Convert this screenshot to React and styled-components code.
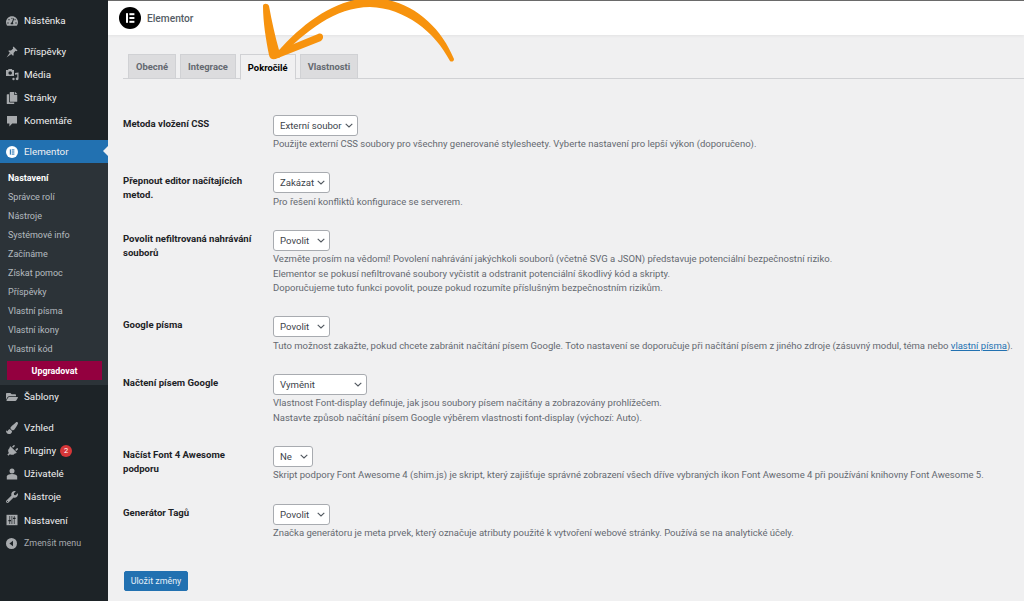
import React from 'react';
import styled, { createGlobalStyle } from 'styled-components';
import {
  FaTachometerAlt, FaCopy, FaFolderOpen, FaPaintBrush,
  FaPlug, FaWrench,
} from 'react-icons/fa';

const GlobalStyle = createGlobalStyle`
  html, body { margin: 0; padding: 0; height: 100%; overflow: hidden; }
  body { background: #f0f0f1; font-family: Roboto, "Liberation Sans", sans-serif; }
`;

const Page = styled.div`
  display: flex;
  width: 1024px;
  height: 601px;
  position: relative;
  overflow: hidden;
`;

const Sidebar = styled.nav`
  width: 108px;
  flex: none;
  background: #1d2327;
  padding-top: 9px;
  box-sizing: border-box;
`;

const MenuGroup = styled.div`
  margin-bottom: ${({ $gap }) => $gap || 0}px;
`;

const MenuItem = styled.div`
  display: flex;
  align-items: center;
  height: 23.1px;
  padding-left: 6px;
  font-size: 9.8px;
  letter-spacing: .02px;
  color: #f0f0f1;
  background: ${({ $active }) => ($active ? '#2271b1' : 'transparent')};
  position: relative;
`;

const MenuIcon = styled.span`
  width: 18px;
  display: flex;
  align-items: center;
  font-size: 12px;
  color: ${({ $active }) => ($active ? '#fff' : '#a7aaad')};
  svg { transform: rotate(${({ $tilt }) => $tilt || 0}deg); }
`;

const ActiveNotch = styled.span`
  position: absolute;
  right: 0;
  top: 6px;
  border: 5.5px solid transparent;
  border-right-color: #f0f0f1;
  border-left: 0;
`;

const Badge = styled.span`
  display: inline-flex;
  align-items: center;
  justify-content: center;
  width: 12px;
  height: 12px;
  margin-left: 4px;
  border-radius: 50%;
  background: #d63638;
  color: #fff;
  font-size: 7.5px;
`;

const Submenu = styled.div`
  background: #2c3338;
  padding: 5px 0 5px;
`;

const SubItem = styled.div`
  height: 19.1px;
  display: flex;
  align-items: center;
  padding-left: 8px;
  font-size: 9px;
  color: ${({ $current }) => ($current ? '#fff' : 'rgba(240,246,252,.7)')};
  font-weight: ${({ $current }) => ($current ? 700 : 400)};
`;

const Upgrade = styled.div`
  margin: 2px 6px 0 7px;
  height: 19px;
  display: flex;
  align-items: center;
  justify-content: center;
  background: #93003f;
  color: #fff;
  font-size: 8.9px;
  font-weight: 700;
`;

const Collapse = styled(MenuItem)`
  color: #a7aaad;
  font-size: 8.9px;
`;

const Main = styled.main`
  flex: 1;
  min-width: 0;
  border-top: 1px solid #6b6b6b;
`;

const Header = styled.header`
  height: 34px;
  background: #fff;
  display: flex;
  align-items: center;
  gap: 6px;
  padding-left: 11px;
  box-shadow: 0 1px 3px rgba(0, 0, 0, .06);
`;

const HeaderTitle = styled.span`
  font-size: 10.2px;
  font-weight: 500;
  color: #555d66;
`;

const Content = styled.div`
  padding: 19px 0 0 15px;
`;

const Tabs = styled.div`
  display: flex;
  gap: 4px;
  height: 24px;
  padding-left: 5px;
  border-bottom: 1px solid #d0d1d4;
`;

const Tab = styled.div`
  display: flex;
  align-items: center;
  padding: 0 7px;
  font-size: 9.4px;
  font-weight: 700;
  border: 1px solid #d0d1d4;
  border-bottom: ${({ $active }) => ($active ? '1px solid #f0f0f1' : 'none')};
  height: ${({ $active }) => ($active ? '24px' : '23px')};
  background: ${({ $active }) => ($active ? '#f0f0f1' : '#dcdcde')};
  color: ${({ $active }) => ($active ? '#000' : '#646970')};
`;

const Rows = styled.div`
  padding-top: 35.5px;
  display: flex;
  flex-direction: column;
  gap: 20.6px;
`;

const Row = styled.div`
  display: grid;
  grid-template-columns: 150px 1fr;
`;

const Label = styled.div`
  font-size: 9.6px;
  font-weight: 700;
  line-height: 14px;
  color: #1d2327;
  padding-top: 2px;
  width: 134px;
`;

const Select = styled.div`
  display: flex;
  align-items: center;
  justify-content: space-between;
  box-sizing: border-box;
  width: ${({ $w }) => $w}px;
  height: 21px;
  padding: 0 4px 0 6px;
  background: #fff;
  border: 1px solid #a8abb0;
  border-radius: 3px;
  font-size: 9.6px;
  color: #3c434a;
  white-space: nowrap;
`;

const Description = styled.div`
  margin-top: 1.5px;
  font-size: 9.5px;
  line-height: 14.5px;
  color: #646970;
  white-space: nowrap;
`;

const DocLink = styled.a`
  color: #2271b1;
  text-decoration: underline;
`;

const SaveButton = styled.button`
  display: block;
  margin: 30.5px 0 0 1px;
  width: 64px;
  height: 20px;
  padding: 0;
  border: 1px solid #2271b1;
  border-radius: 2px;
  background: #2271b1;
  color: #e6f0f8;
  font: 8.9px Roboto, sans-serif;
`;

const Arrow = styled.svg`
  position: absolute;
  left: 0;
  top: 0;
  pointer-events: none;
`;

const ElementorLogo = ({ size, bg, fg }) => (
  <svg width={size} height={size} viewBox="0 0 22 22">
    <circle cx="11" cy="11" r="11" fill={bg} />
    <rect x="7" y="6.2" width="2" height="9.6" fill={fg} />
    <rect x="10.4" y="6.2" width="5" height="2" fill={fg} />
    <rect x="10.4" y="10" width="5" height="2" fill={fg} />
    <rect x="10.4" y="13.8" width="5" height="2" fill={fg} />
  </svg>
);

const Chevron = () => (
  <svg width="8" height="5" viewBox="0 0 8 5">
    <path d="M.7.8 4 4 7.3.8" fill="none" stroke="#50575e" strokeWidth="1.1" />
  </svg>
);

const CollapseIcon = () => (
  <svg width="11" height="11" viewBox="0 0 11 11">
    <circle cx="5.5" cy="5.5" r="5.5" fill="#a7aaad" />
    <path d="M7 2.8v5.4L3.4 5.5z" fill="#1d2327" />
  </svg>
);

const PinIcon = () => (
  <svg width="12" height="12" viewBox="0 0 12 12" fill="currentColor">
    <path d="M7.5.5 11.5 4.5 10.5 5.2 9.5 4.8 7.6 7V9.4H6.6L2.6 5.4V4.4H5L7.2 2.5 6.8 1.5Z" />
    <path d="M4 6.6 .5 11.5 5.4 8Z" />
  </svg>
);

const MediaIcon = () => (
  <svg width="13" height="13" viewBox="0 0 13 13" fill="currentColor">
    <path d="M0 2h2l.6-1h3.2l.6 1h1.6v6H0zm4.2 1.2a1.8 1.8 0 1 0 0 3.6 1.8 1.8 0 0 0 0-3.6z" />
    <path d="M12.5 4.5v6.3a1.4 1.4 0 1 1-1.2-1.3V6.3L9 6.8V5z" />
    <circle cx="7.5" cy="11" r="1.2" />
  </svg>
);

const CommentIcon = () => (
  <svg width="12" height="12" viewBox="0 0 12 12" fill="currentColor">
    <path d="M1 1h10v7.4H6.2L3.4 11.4V8.4H1z" />
  </svg>
);

const UserIcon = () => (
  <svg width="12" height="12" viewBox="0 0 12 12" fill="currentColor">
    <circle cx="6" cy="3" r="2.5" />
    <path d="M.8 11.5V8.6C.8 7 3 6 6 6s5.2 1 5.2 2.6v2.9z" />
  </svg>
);

const SettingsIcon = () => (
  <svg width="12" height="12" viewBox="0 0 12 12">
    <path d="M.5.8h11v10.4H.5z" fill="currentColor" />
    <path d="M3.7 2v8M8.3 2v8M5.9 2v8" stroke="#1d2327" strokeWidth=".7" />
    <path d="M2.4 6.6h2.6M7 4.4h2.6" stroke="#1d2327" strokeWidth="1.3" />
  </svg>
);

const subItems = [
  'Správce rolí', 'Nástroje', 'Systémové info', 'Začínáme', 'Získat pomoc',
  'Příspěvky', 'Vlastní písma', 'Vlastní ikony', 'Vlastní kód',
];

const settings = [
  {
    label: 'Metoda vložení CSS', value: 'Externí soubor', w: 85,
    desc: ['Použijte externí CSS soubory pro všechny generované stylesheety. Vyberte nastavení pro lepší výkon (doporučeno).'],
  },
  {
    label: 'Přepnout editor načítajících metod.', value: 'Zakázat', w: 57,
    desc: ['Pro řešení konfliktů konfigurace se serverem.'],
  },
  {
    label: 'Povolit nefiltrovaná nahrávání souborů', value: 'Povolit', w: 57,
    desc: [
      'Vezměte prosím na vědomí! Povolení nahrávání jakýchkoli souborů (včetně SVG a JSON) představuje potenciální bezpečnostní riziko.',
      'Elementor se pokusí nefiltrované soubory vyčistit a odstranit potenciální škodlivý kód a skripty.',
      'Doporučujeme tuto funkci povolit, pouze pokud rozumíte příslušným bezpečnostním rizikům.',
    ],
  },
  {
    label: 'Google písma', value: 'Povolit', w: 57,
    desc: [
      <>Tuto možnost zakažte, pokud chcete zabránit načítání písem Google. Toto nastavení se doporučuje při načítání písem z jiného zdroje (zásuvný modul, téma nebo <DocLink>vlastní písma</DocLink>).</>,
    ],
  },
  {
    label: 'Načtení písem Google', value: 'Vyměnit', w: 94,
    desc: [
      'Vlastnost Font-display definuje, jak jsou soubory písem načítány a zobrazovány prohlížečem.',
      'Nastavte způsob načítání písem Google výběrem vlastnosti font-display (výchozí: Auto).',
    ],
  },
  {
    label: 'Načíst Font 4 Awesome podporu', value: 'Ne', w: 40,
    desc: ['Skript podpory Font Awesome 4 (shim.js) je skript, který zajišťuje správné zobrazení všech dříve vybraných ikon Font Awesome 4 při používání knihovny Font Awesome 5.'],
  },
  {
    label: 'Generátor Tagů', value: 'Povolit', w: 57,
    desc: ['Značka generátoru je meta prvek, který označuje atributy použité k vytvoření webové stránky. Používá se na analytické účely.'],
  },
];

export default function App() {
  return (
    <Page>
      <GlobalStyle />
      <Sidebar>
        <MenuGroup $gap={8}>
          <MenuItem><MenuIcon><FaTachometerAlt /></MenuIcon>Nástěnka</MenuItem>
        </MenuGroup>
        <MenuGroup $gap={7.5}>
          <MenuItem><MenuIcon><PinIcon /></MenuIcon>Příspěvky</MenuItem>
          <MenuItem><MenuIcon><MediaIcon /></MenuIcon>Média</MenuItem>
          <MenuItem><MenuIcon><FaCopy /></MenuIcon>Stránky</MenuItem>
          <MenuItem><MenuIcon><CommentIcon /></MenuIcon>Komentáře</MenuItem>
        </MenuGroup>
        <MenuItem $active>
          <MenuIcon $active><ElementorLogo size={12} bg="#fff" fg="#2271b1" /></MenuIcon>
          Elementor
          <ActiveNotch />
        </MenuItem>
        <Submenu>
          <SubItem $current>Nastavení</SubItem>
          {subItems.map((name) => <SubItem key={name}>{name}</SubItem>)}
          <Upgrade>Upgradovat</Upgrade>
        </Submenu>
        <MenuGroup $gap={8}>
          <MenuItem><MenuIcon><FaFolderOpen /></MenuIcon>Šablony</MenuItem>
        </MenuGroup>
        <MenuItem><MenuIcon><FaPaintBrush /></MenuIcon>Vzhled</MenuItem>
        <MenuItem><MenuIcon $tilt={45}><FaPlug /></MenuIcon>Pluginy<Badge>2</Badge></MenuItem>
        <MenuItem><MenuIcon><UserIcon /></MenuIcon>Uživatelé</MenuItem>
        <MenuItem><MenuIcon><FaWrench /></MenuIcon>Nástroje</MenuItem>
        <MenuItem><MenuIcon><SettingsIcon /></MenuIcon>Nastavení</MenuItem>
        <Collapse><MenuIcon><CollapseIcon /></MenuIcon>Zmenšit menu</Collapse>
      </Sidebar>
      <Main>
        <Header>
          <ElementorLogo size={22} bg="#000" fg="#fff" />
          <HeaderTitle>Elementor</HeaderTitle>
        </Header>
        <Content>
          <Tabs>
            <Tab>Obecné</Tab>
            <Tab>Integrace</Tab>
            <Tab $active>Pokročilé</Tab>
            <Tab>Vlastnosti</Tab>
          </Tabs>
          <Rows>
            {settings.map((s) => (
              <Row key={s.label}>
                <Label>{s.label}</Label>
                <div>
                  <Select $w={s.w}>{s.value}<Chevron /></Select>
                  <Description>
                    {s.desc.map((line, i) => <div key={i}>{line}</div>)}
                  </Description>
                </div>
              </Row>
            ))}
          </Rows>
          <SaveButton>Uložit změny</SaveButton>
        </Content>
      </Main>
      <Arrow width="1024" height="80" viewBox="0 0 1024 80">
        <g fill="#f7930e">
          <path d="M274 56C300 25 335-2 372-2C410-1 440 25 454 59C454 62 451 62 450 61C435 32 405 8 370 7C335 7 305 32 279 58Z" />
          <path d="M263 6C263 3 268 3 269 6C272 22 275 36 279 50L318 34C323 32 325 38 321 41L278 58C274 60 270 60 269 55C266 40 263 22 263 6Z" />
        </g>
      </Arrow>
    </Page>
  );
}
